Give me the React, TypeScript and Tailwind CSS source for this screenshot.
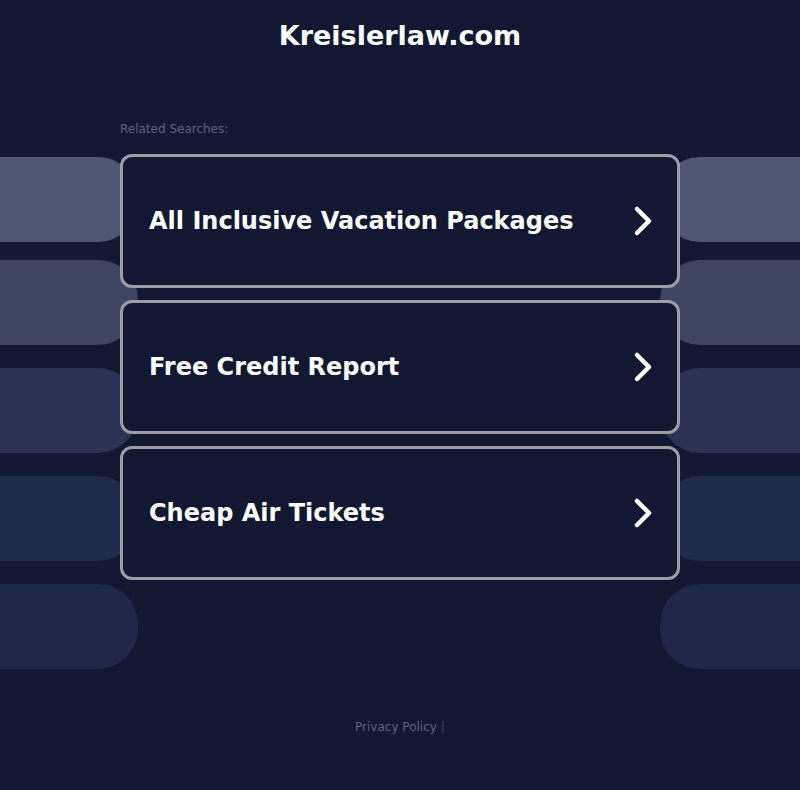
import React from 'react'

const bands = [
  { color: 'bg-[#4e5675]', gap: 'mt-[3px]' },
  { color: 'bg-[#3d4563]', gap: 'mt-[18px]' },
  { color: 'bg-[#2a3353]', gap: 'mt-[23px]' },
  { color: 'bg-[#212b4b]', gap: 'mt-[23px]' },
  { color: 'bg-[#1e2747]', gap: 'mt-[23px]' },
]

const searches = ['All Inclusive Vacation Packages', 'Free Credit Report', 'Cheap Air Tickets']

function Chevron() {
  return (
    <svg width="24" height="32" viewBox="0 0 24 32" fill="none">
      <path d="M6 4 L18 16 L6 28" stroke="white" strokeWidth="4.5" strokeLinecap="round" strokeLinejoin="round" />
    </svg>
  )
}

export default function App() {
  return (
    <div className="min-h-[790px] w-full bg-[#121831] font-['DejaVu_Sans',sans-serif]">
      {/* Header */}
      <div className="flex h-[72px] items-center justify-center">
        <h1 className="text-[27px] font-bold text-white">Kreislerlaw.com</h1>
      </div>

      <div className="h-[48px]" />

      <div className="mx-auto w-[560px] pb-[16px] text-[12px] text-[#5b6483]">Related Searches:</div>

      {/* Stacked: decorative bands behind, cards on top */}
      <div className="grid">
        <div className="col-start-1 row-start-1 flex flex-col">
          {bands.map((b, i) => (
            <div key={i} className={`flex h-[85px] justify-between ${b.gap}`}>
              <div className={`w-[138px] rounded-r-[40px] ${b.color}`} />
              <div className={`w-[140px] rounded-l-[40px] ${b.color}`} />
            </div>
          ))}
        </div>

        <div className="col-start-1 row-start-1 mx-auto flex w-[560px] flex-col gap-[12px]">
          {searches.map((s) => (
            <a
              key={s}
              href="#"
              className="flex h-[134px] items-center justify-between rounded-[12px] border-[3px] border-[#9c9ea3] bg-[#121831] pl-[26px] pr-[22px]"
            >
              <span className="text-[24px] font-bold text-white">{s}</span>
              <Chevron />
            </a>
          ))}
        </div>
      </div>

      <div className="mt-[49px] flex justify-center text-[12px] text-[#5b6483]">
        <span>Privacy Policy</span>
        <span className="ml-[4px] text-[#3a4260]">|</span>
      </div>
    </div>
  )
}
